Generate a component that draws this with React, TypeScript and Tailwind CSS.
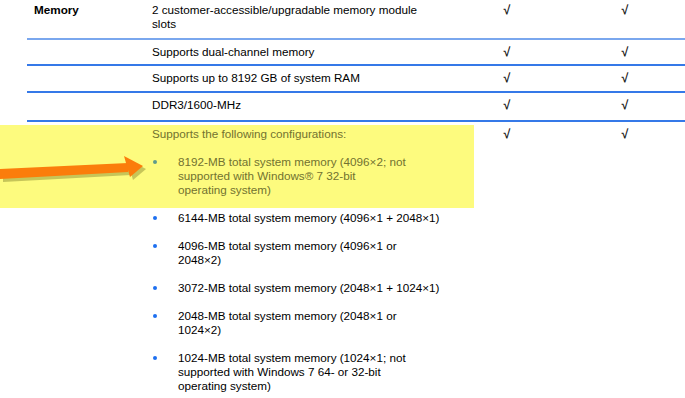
import React from "react";

type Row = {
    label?: string;
    lines: string[];
    h: string;
    pt: string;
    line: string;
};

const ROWS: Row[] = [
    { label: "Memory", lines: ["2 customer-accessible/upgradable memory module", "slots"], h: "h-[40px]", pt: "pt-[3px]", line: "border-[#7aa7ee]" },
    { lines: ["Supports dual-channel memory"], h: "h-[26px]", pt: "pt-[5px]", line: "border-[#3579e8]" },
    { lines: ["Supports up to 8192 GB of system RAM"], h: "h-[27px]", pt: "pt-[5px]", line: "border-[#3579e8]" },
    { lines: ["DDR3/1600-MHz"], h: "h-[29px]", pt: "pt-[5px]", line: "border-[#3579e8]" },
];

// line breaks kept as in the source document
const CONFIGS: string[][] = [
    ["6144-MB total system memory (4096×1 + 2048×1)"],
    ["4096-MB total system memory (4096×1 or", "2048×2)"],
    ["3072-MB total system memory (2048×1 + 1024×1)"],
    ["2048-MB total system memory (2048×1 or", "1024×2)"],
    ["1024-MB total system memory (1024×1; not", "supported with Windows 7 64- or 32-bit", "operating system)"],
];

const COLS = "grid grid-cols-[119px_303px_116px_120px]";

function Check() {
    return <div className="text-center text-[12.5px] font-bold text-[#1a1a1a]">√</div>;
}

function Lines({ lines }: { lines: string[] }) {
    return (
        <div className="whitespace-nowrap">
            {lines.map((l) => (
                <div key={l}>{l}</div>
            ))}
        </div>
    );
}

function Bullet({ lines, dot, color }: { lines: string[]; dot: string; color?: string }) {
    return (
        <div className={`flex items-start ${color ?? ""}`}>
            <span className="w-[26px] h-[14px] flex items-center shrink-0">
                <span className={`ml-[1px] w-[4px] h-[4px] rounded-full ${dot}`} />
            </span>
            <Lines lines={lines} />
        </div>
    );
}

export default function App() {
    return (
        <div className="relative w-[685px] h-[398px] overflow-hidden bg-white font-['Liberation_Sans',Arial,sans-serif] text-[11.7px] leading-[14px] text-black">
            {/* highlighter mark */}
            <div className="absolute left-0 top-[125px] w-[474px] h-[83px] bg-[#fdfb7e]" />

            <div className="relative ml-[27px]">
                {ROWS.map((r, i) => (
                    <div key={i} className={`${COLS} ${r.h} ${r.pt} border-b-2 ${r.line}`}>
                        <div className="pl-[7px] font-bold">{r.label}</div>
                        <div className="pl-[6px]">
                            <Lines lines={r.lines} />
                        </div>
                        <Check />
                        <Check />
                    </div>
                ))}

                {/* configurations */}
                <div className={`${COLS} pt-[5px]`}>
                    <div />
                    <div className="pl-[6px] space-y-[14px]">
                        <div className="text-[#727230]">Supports the following configurations:</div>
                        <Bullet
                            lines={["8192-MB total system memory (4096×2; not", "supported with Windows® 7 32-bit", "operating system)"]}
                            dot="bg-[#5f9a8c]"
                            color="text-[#727230]"
                        />
                        {CONFIGS.map((c) => (
                            <Bullet key={c[0]} lines={c} dot="bg-[#1d6ff0]" />
                        ))}
                    </div>
                    <Check />
                    <Check />
                </div>
            </div>

            {/* arrow */}
            <svg className="absolute left-0 top-[150px]" width="160" height="40" viewBox="0 0 160 40">
                <g transform="translate(3,3)" fill="#9a9a3c" opacity="0.55">
                    <polygon points="0,19 128,13 128,22 0,29" />
                    <polygon points="124,6 143,16 130,27" />
                </g>
                <g fill="#fb7d0b">
                    <polygon points="0,19 128,13 128,22 0,29" />
                    <polygon points="124,6 143,16 130,27" />
                </g>
            </svg>
        </div>
    );
}
